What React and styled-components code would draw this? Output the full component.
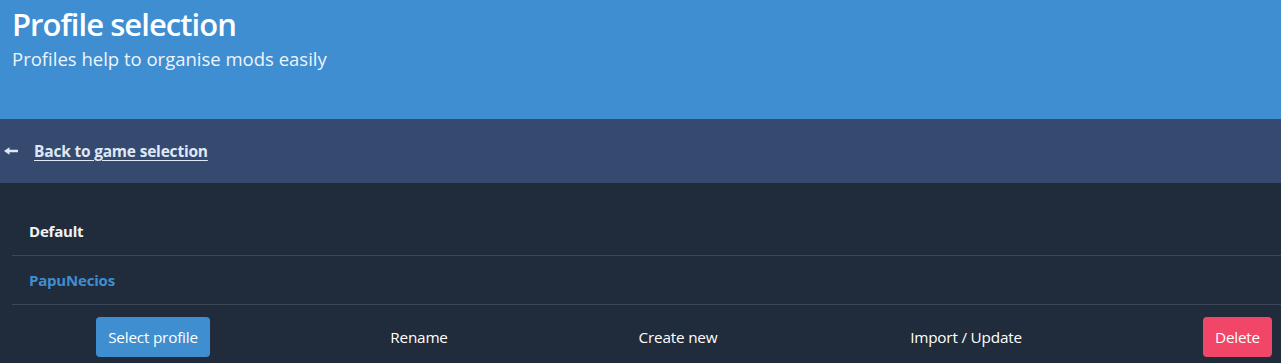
import { createGlobalStyle, styled } from "styled-components";

const profiles = [
  { name: "Default", selected: false },
  { name: "PapuNecios", selected: true },
];

const actions = [
  { label: "Select profile", kind: "info" },
  { label: "Rename" },
  { label: "Create new" },
  { label: "Import / Update" },
  { label: "Delete", kind: "danger" },
];

export default function App() {
  return (
    <>
      <GlobalStyle />
      <Hero>
        <Title>Profile selection</Title>
        <Subtitle>Profiles help to organise mods easily</Subtitle>
      </Hero>
      <NavBar>
        <BackArrow viewBox="0 0 14 8" aria-hidden="true">
          <path d="M0 4 L5.5 0.2 L5.5 2.8 L14 2.8 L14 5.2 L5.5 5.2 L5.5 7.8 Z" fill="currentColor" />
        </BackArrow>
        <BackLink href="#">Back to game selection</BackLink>
      </NavBar>
      <Content>
        {profiles.map((p) => (
          <ProfileRow key={p.name}>
            <ProfileName $selected={p.selected}>{p.name}</ProfileName>
          </ProfileRow>
        ))}
        <Actions>
          {actions.map((a) => (
            <ActionItem key={a.label}>
              <Button $kind={a.kind}>{a.label}</Button>
            </ActionItem>
          ))}
        </Actions>
      </Content>
    </>
  );
}

const GlobalStyle = createGlobalStyle`
  * { box-sizing: border-box; }
  body {
    margin: 0;
    background: #202c3b;
    font-family: "Open Sans", "Noto Sans", sans-serif;
    overflow: hidden;
  }
`;

const Hero = styled.header`
  height: 119px;
  padding: 6px 12px 0;
  background: #3f8ed1;
`;

const Title = styled.h1`
  margin: 0;
  font-size: 31px;
  line-height: 36px;
  font-weight: 600;
  color: #ffffff;
  letter-spacing: -0.95px;
`;

const Subtitle = styled.h2`
  margin: 5px 0 0;
  font-size: 18.5px;
  line-height: 24px;
  font-weight: 400;
  color: #eef4fb;
`;

const NavBar = styled.nav`
  display: flex;
  align-items: center;
  height: 64px;
  padding-left: 4px;
  background: #364a70;
  color: #dfe8f6;
`;

const BackArrow = styled.svg`
  width: 14px;
  height: 8px;
  margin-right: 16px;
`;

const BackLink = styled.a`
  font-size: 15.5px;
  font-weight: 700;
  color: #dfe8f6;
  text-decoration: underline;
  text-underline-offset: 3px;
  letter-spacing: -0.2px;
`;

const Content = styled.main`
  padding-top: 24px;
  overflow: hidden;
`;

const ProfileRow = styled.div`
  display: flex;
  align-items: center;
  height: 49px;
  margin-left: 12px;
  padding-left: 17px;
  border-bottom: 1px solid #3c4858;
`;

const ProfileName = styled.span`
  font-size: 15px;
  line-height: 24px;
  font-weight: 700;
  letter-spacing: -0.2px;
  color: ${(p) => (p.$selected ? "#3f8ed1" : "#f2f2f2")};
`;

const Actions = styled.div`
  display: grid;
  grid-template-columns: 284px 248px 270px 306px 237px;
  width: 1345px;
  margin-left: 11px;
  padding-top: 12px;
`;

const ActionItem = styled.div`
  display: flex;
  justify-content: center;
`;

const Button = styled.button`
  height: 40px;
  padding: 0 12px;
  border: none;
  border-radius: 4px;
  font-family: inherit;
  font-size: 15.3px;
  letter-spacing: -0.2px;
  color: #ffffff;
  cursor: pointer;
  background: ${(p) =>
    p.$kind === "info" ? "#3e8ed0" : p.$kind === "danger" ? "#f14668" : "transparent"};
`;
